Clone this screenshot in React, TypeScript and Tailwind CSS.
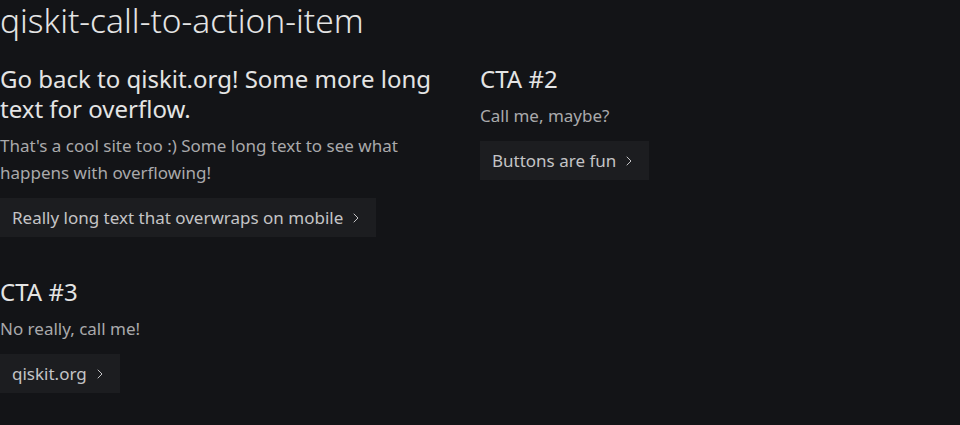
import { ChevronRight } from 'lucide-react';

interface Cta {
  title: string;
  description: string;
  label: string;
}

const items: Cta[] = [
  {
    title: 'Go back to qiskit.org! Some more long text for overflow.',
    description: "That's a cool site too :) Some long text to see what happens with overflowing!",
    label: 'Really long text that overwraps on mobile',
  },
  {
    title: 'CTA #2',
    description: 'Call me, maybe?',
    label: 'Buttons are fun',
  },
  {
    title: 'CTA #3',
    description: 'No really, call me!',
    label: 'qiskit.org',
  },
];

function CallToAction({ item }: { item: Cta }) {
  return (
    <div className="flex max-w-[432px] flex-col items-start">
      <h2 className="text-[24px] leading-[30px] text-[#e4e4e4]">{item.title}</h2>
      <p className="mt-[8px] text-[17px] leading-[27px] text-[#a9a9ab]">{item.description}</p>
      <a className="mt-[12px] flex h-[39px] items-center gap-[5px] bg-[#1c1d20] pl-[12px] pr-[12px] text-[17px] text-[#c4c4c6]">
        <span>{item.label}</span>
        <ChevronRight size={16} strokeWidth={1.5} />
      </a>
    </div>
  );
}

export default function App() {
  return (
    <div className="min-h-[425px] bg-[#131417] font-['Noto_Sans',sans-serif]">
      <h1 className="text-[33.5px] font-light leading-[40px] text-[#e4e4e4]">qiskit-call-to-action-item</h1>
      <div className="mt-[24px] grid grid-cols-[480px_480px] gap-y-[40px]">
        {items.map((item) => (
          <CallToAction key={item.title} item={item} />
        ))}
      </div>
    </div>
  );
}
